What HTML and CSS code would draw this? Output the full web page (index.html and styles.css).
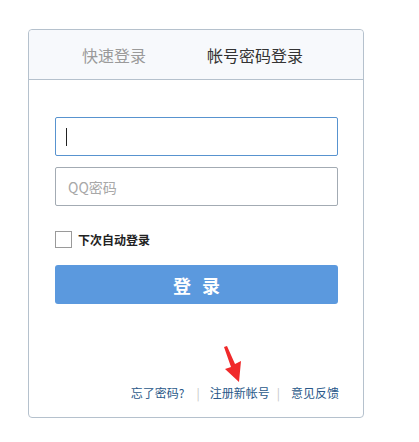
FILE: index.html
```html
<!DOCTYPE html>
<html lang="zh-CN">
<head>
<meta charset="utf-8">
<title>QQ登录</title>
<link rel="stylesheet" href="styles.css">
</head>
<body>
<div class="card">
  <div class="tabs">
    <span class="tab">快速登录</span>
    <span class="tab active">帐号密码登录</span>
  </div>
  <div class="form">
    <div class="input focus"><span class="caret"></span></div>
    <div class="input"><span class="placeholder">QQ密码</span></div>
    <label class="remember"><span class="box"></span><span class="remember-text">下次自动登录</span></label>
    <div class="btn">登录</div>
  </div>
  <div class="footer">
    <a class="link">忘了密码?</a>
    <span class="sep">|</span>
    <a class="link">注册新帐号</a>
    <span class="sep sep2">|</span>
    <a class="link">意见反馈</a>
  </div>
  <svg class="arrow" width="30" height="45" viewBox="0 0 30 45">
    <polygon points="6,6 9,5 17,23 23,20 21,41 7,28 13,26" fill="#f0292a"/>
  </svg>
</div>
</body>
</html>
```

FILE: styles.css
```css
html, body {
  margin: 0;
  padding: 0;
  background: #fff;
}
body {
  font-family: "Noto Sans CJK SC", "Noto Sans", sans-serif;
}
.card {
  position: relative;
  box-sizing: border-box;
  margin: 29px 0 0 28px;
  width: 336px;
  height: 389px;
  border: 1px solid #b5c1cd;
  border-radius: 4px;
  display: flex;
  flex-direction: column;
}
.tabs {
  height: 49px;
  background: #f7f9fc;
  border-bottom: 1px solid #b5c1cd;
  border-radius: 4px 4px 0 0;
  display: flex;
  align-items: center;
  padding-left: 53px;
  gap: 61px;
}
.tab {
  font-size: 16px;
  line-height: 20px;
  color: #9a9a9a;
}
.tab.active {
  color: #333;
}
.form {
  padding: 37px 0 0 26px;
  display: flex;
  flex-direction: column;
}
.input {
  box-sizing: border-box;
  width: 283px;
  height: 39px;
  border: 1px solid #a3abb3;
  border-radius: 2px;
  display: flex;
  align-items: center;
  padding-left: 12px;
}
.input + .input {
  margin-top: 11px;
}
.input.focus {
  border-color: #5893cf;
  padding-left: 10px;
}
.caret {
  width: 1px;
  height: 18px;
  background: #222;
}
.placeholder {
  font-size: 14px;
  color: #a8a8a8;
  line-height: 20px;
}
.remember {
  margin-top: 25px;
  display: flex;
  align-items: center;
  height: 17px;
}
.box {
  box-sizing: border-box;
  width: 17px;
  height: 17px;
  border: 1px solid #9a9a9a;
  background: #fff;
}
.remember-text {
  margin-left: 6px;
  font-size: 12px;
  font-weight: 700;
  color: #222;
  line-height: 16px;
}
.btn {
  margin-top: 17px;
  width: 283px;
  height: 39px;
  background: #5b99de;
  border-radius: 3px;
  color: #fff;
  font-size: 18px;
  font-weight: 700;
  letter-spacing: 11px;
  text-indent: 11px;
  display: flex;
  align-items: center;
  justify-content: center;
}
.footer {
  margin-top: auto;
  padding: 0 24px 16px 0;
  display: flex;
  justify-content: flex-end;
  align-items: center;
  height: 16px;
}
.link {
  font-size: 12px;
  line-height: 16px;
  color: #2a5889;
}
.sep {
  font-size: 12px;
  line-height: 16px;
  color: #c5c5c5;
  margin: 0 10px 0 12px;
}
.sep2 {
  margin: 0 11px 0 7px;
}
.arrow {
  position: absolute;
  left: 189px;
  top: 311px;
}
```
